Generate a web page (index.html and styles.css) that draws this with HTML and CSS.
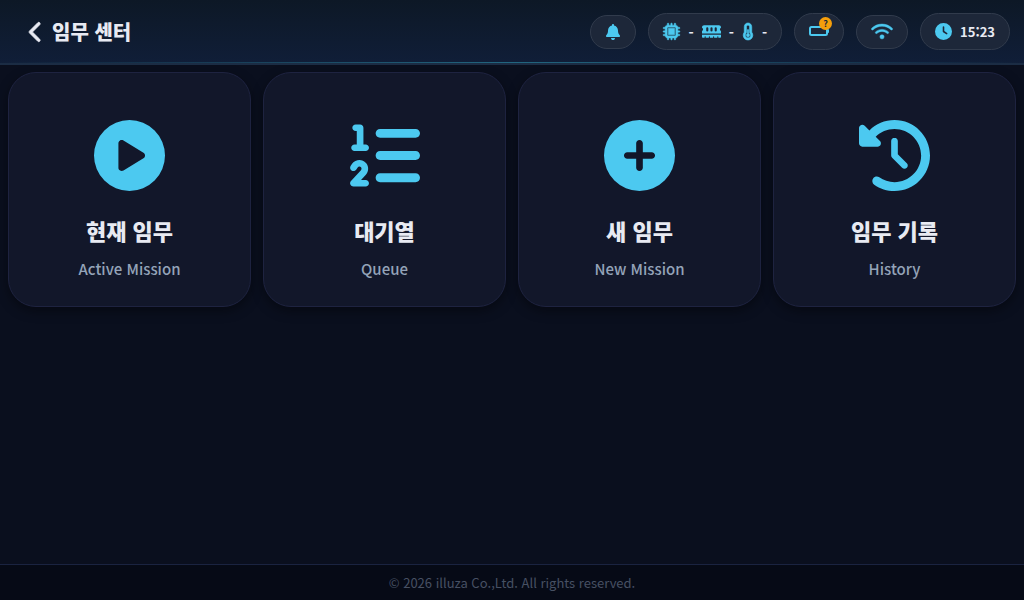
FILE: index.html
```html
<!DOCTYPE html>
<html lang="ko">
<head>
<meta charset="utf-8">
<meta name="viewport" content="width=device-width, initial-scale=1">
<title>임무 센터</title>
<link rel="stylesheet" href="styles.css">
</head>
<body>
<header class="topbar">
  <div class="heading">
    <button class="back" type="button" aria-label="뒤로">
      <svg class="icon-back" viewBox="0 0 320 512"><path d="M9.4 233.4c-12.5 12.5-12.5 32.8 0 45.3l192 192c12.5 12.5 32.8 12.5 45.3 0s12.5-32.8 0-45.3L77.3 256 246.6 86.6c12.5-12.5 12.5-32.8 0-45.3s-32.8-12.5-45.3 0l-192 192z"/></svg>
    </button>
    <h1 class="title">임무 센터</h1>
  </div>
  <div class="status">
    <button class="pill pill-button" type="button" aria-label="알림">
      <svg class="icon-bell" viewBox="0 0 448 512"><path d="M224 0c-17.7 0-32 14.3-32 32V51.2C119 66 64 130.6 64 208v18.8c0 47-17.3 92.4-48.5 127.6l-7.4 8.3c-8.4 9.4-10.4 22.9-5.3 34.4S19.4 416 32 416H416c12.6 0 24-7.4 29.2-18.9s3.1-25-5.3-34.4l-7.4-8.3C401.3 319.2 384 273.9 384 226.8V208c0-77.4-55-142-128-156.8V32c0-17.7-14.3-32-32-32zm45.3 493.3c12-12 18.7-28.3 18.7-45.3H224 160c0 17 6.7 33.3 18.7 45.3s28.3 18.7 45.3 18.7s33.3-6.7 45.3-18.7z"/></svg>
    </button>
    <div class="pill pill-system">
      <svg class="icon-chip" viewBox="0 0 512 512"><path fill-rule="evenodd" d="M176 24c0-13.3-10.7-24-24-24s-24 10.7-24 24V64c-35.3 0-64 28.7-64 64H24c-13.3 0-24 10.7-24 24s10.7 24 24 24H64v56H24c-13.3 0-24 10.7-24 24s10.7 24 24 24H64v56H24c-13.3 0-24 10.7-24 24s10.7 24 24 24H64c0 35.3 28.7 64 64 64v40c0 13.3 10.7 24 24 24s24-10.7 24-24V448h56v40c0 13.3 10.7 24 24 24s24-10.7 24-24V448h56v40c0 13.3 10.7 24 24 24s24-10.7 24-24V448c35.3 0 64-28.7 64-64h40c13.3 0 24-10.7 24-24s-10.7-24-24-24H448V280h40c13.3 0 24-10.7 24-24s-10.7-24-24-24H448V176h40c13.3 0 24-10.7 24-24s-10.7-24-24-24H448c0-35.3-28.7-64-64-64V24c0-13.3-10.7-24-24-24s-24 10.7-24 24V64H280V24c0-13.3-10.7-24-24-24s-24 10.7-24 24V64H176V24zM160 128H352c17.7 0 32 14.3 32 32V352c0 17.7-14.3 32-32 32H160c-17.7 0-32-14.3-32-32V160c0-17.7 14.3-32 32-32zM352 160H160V352H352V160z"/></svg>
      <span>-</span>
      <svg class="icon-memory" viewBox="0 0 576 512"><path fill-rule="evenodd" d="M64 64C28.7 64 0 92.7 0 128v7.4c0 6.8 4.4 12.6 10.1 16.3C23.3 160.3 32 175.1 32 192s-8.7 31.7-21.9 40.3C4.4 236 0 241.8 0 248.6V320H576V248.6c0-6.8-4.4-12.6-10.1-16.3C552.7 223.7 544 208.9 544 192s8.7-31.7 21.9-40.3c5.7-3.7 10.1-9.5 10.1-16.3V128c0-35.3-28.7-64-64-64H64zM576 352H0v64c0 17.7 14.3 32 32 32H80V416a16 16 0 0 1 32 0v32h96V416a16 16 0 0 1 32 0v32h96V416a16 16 0 0 1 32 0v32h96V416a16 16 0 0 1 32 0v32h48c17.7 0 32-14.3 32-32V352zM192 160v64a32 32 0 0 1-64 0V160a32 32 0 0 1 64 0zm128 0v64a32 32 0 0 1-64 0V160a32 32 0 0 1 64 0zm128 0v64a32 32 0 0 1-64 0V160a32 32 0 0 1 64 0z"/></svg>
      <span>-</span>
      <svg class="icon-temp" viewBox="0 0 320 512"><path fill-rule="evenodd" d="M160 64c-26.5 0-48 21.5-48 48V276.5c0 17.3-7.1 31.9-15.3 42.5C86.2 332.6 80 349.5 80 368c0 44.2 35.8 80 80 80s80-35.8 80-80c0-18.5-6.2-35.4-16.7-48.9c-8.2-10.6-15.3-25.2-15.3-42.5V112c0-26.5-21.5-48-48-48zM48 112C48 50.2 98.1 0 160 0s112 50.1 112 112V276.5c0 .1 .1 .3 .2 .6c.2 .6 .8 1.6 1.7 2.8c18.9 24.4 30.1 55 30.1 88.1c0 79.5-64.5 144-144 144S16 447.5 16 368c0-33.2 11.2-63.8 30.1-88.1c.9-1.2 1.5-2.2 1.7-2.8c.1-.3 .2-.5 .2-.6V112zM208 368c0 26.5-21.5 48-48 48s-48-21.5-48-48c0-20.9 13.4-38.7 32-45.3V208c0-8.8 7.2-16 16-16s16 7.2 16 16V322.7c18.6 6.6 32 24.4 32 45.3z"/></svg>
      <span>-</span>
    </div>
    <div class="pill pill-battery">
      <span class="battery">
        <svg class="icon-battery" viewBox="0 0 20 14"><rect x="1" y="2" width="17" height="8" rx="1.5" fill="none" stroke="currentColor" stroke-width="2"/><rect x="18" y="4" width="2" height="4" rx="1"/></svg>
        <span class="badge">?</span>
      </span>
    </div>
    <div class="pill pill-button">
      <svg class="icon-wifi" viewBox="0 0 640 512"><path d="M54.2 202.9C123.2 136.7 216.8 96 320 96s196.8 40.7 265.8 106.9c12.8 12.2 33 11.8 45.2-.9s11.8-33-.9-45.2C549.7 79.5 440.4 32 320 32S90.3 79.5 9.8 156.7C-2.9 169-3.3 189.2 8.9 202s32.5 13.2 45.2 .9zM320 256c56.8 0 108.6 21.1 148.2 56c13.3 11.7 33.5 10.4 45.2-2.8s10.4-33.5-2.8-45.2C459.8 219.2 393 192 320 192s-139.8 27.2-190.5 72c-13.3 11.7-14.5 31.9-2.8 45.2s31.9 14.5 45.2 2.8c39.5-34.9 91.3-56 148.2-56zm64 160a64 64 0 1 0 -128 0 64 64 0 1 0 128 0z"/></svg>
    </div>
    <div class="pill pill-clock">
      <svg class="icon-clock" viewBox="0 0 512 512"><path fill-rule="evenodd" d="M256 0a256 256 0 1 1 0 512A256 256 0 1 1 256 0zM232 120V256c0 8 4 15.5 10.7 20l96 64c11 7.4 25.9 4.4 33.3-6.7s4.4-25.9-6.7-33.3L280 243.2V120c0-13.3-10.7-24-24-24s-24 10.7-24 24z"/></svg>
      <time class="time">15:23</time>
    </div>
  </div>
</header>

<main class="menu">
  <button class="card" type="button">
    <svg class="card-icon" viewBox="0 0 512 512"><path fill-rule="evenodd" d="M0 256a256 256 0 1 1 512 0A256 256 0 1 1 0 256zM188.3 147.1c-7.6 4.2-12.3 12.3-12.3 20.9V344c0 8.7 4.7 16.7 12.3 20.9s16.8 4.1 24.3-.5l144-88c7.1-4.4 11.5-12.1 11.5-20.5s-4.4-16.1-11.5-20.5l-144-88c-7.4-4.5-16.7-4.7-24.3-.5z"/></svg>
    <span class="card-title">현재 임무</span>
    <span class="card-subtitle">Active Mission</span>
  </button>
  <button class="card" type="button">
    <svg class="card-icon" viewBox="0 0 512 512"><path d="M24 56c0-13.3 10.7-24 24-24H80c13.3 0 24 10.7 24 24V176h16c13.3 0 24 10.7 24 24s-10.7 24-24 24H40c-13.3 0-24-10.7-24-24s10.7-24 24-24H56V80H48C34.7 80 24 69.3 24 56zM86.7 341.2c-6.5-7.4-18.3-6.9-24 1.2L51.5 357.9c-7.7 10.8-22.7 13.3-33.5 5.6s-13.3-22.7-5.6-33.5l11.1-15.6c23.7-33.2 72.3-35.6 99.2-4.9c21.3 24.4 20.8 60.9-1.1 84.7L86.8 432H120c13.3 0 24 10.7 24 24s-10.7 24-24 24H32c-9.5 0-18.2-5.6-22-14.4s-2.1-18.9 4.3-25.9l72-78c5.3-5.8 5.4-14.6 .3-20.5zM224 64H480c17.7 0 32 14.3 32 32s-14.3 32-32 32H224c-17.7 0-32-14.3-32-32s14.3-32 32-32zm0 160H480c17.7 0 32 14.3 32 32s-14.3 32-32 32H224c-17.7 0-32-14.3-32-32s14.3-32 32-32zm0 160H480c17.7 0 32 14.3 32 32s-14.3 32-32 32H224c-17.7 0-32-14.3-32-32s14.3-32 32-32z"/></svg>
    <span class="card-title">대기열</span>
    <span class="card-subtitle">Queue</span>
  </button>
  <button class="card" type="button">
    <svg class="card-icon" viewBox="0 0 512 512"><path fill-rule="evenodd" d="M256 512A256 256 0 1 0 256 0a256 256 0 1 0 0 512zM232 344V280H168c-13.3 0-24-10.7-24-24s10.7-24 24-24h64V168c0-13.3 10.7-24 24-24s24 10.7 24 24v64h64c13.3 0 24 10.7 24 24s-10.7 24-24 24H280v64c0 13.3-10.7 24-24 24s-24-10.7-24-24z"/></svg>
    <span class="card-title">새 임무</span>
    <span class="card-subtitle">New Mission</span>
  </button>
  <button class="card" type="button">
    <svg class="card-icon" viewBox="0 0 512 512"><path d="M75 75L41 41C25.9 25.9 0 36.6 0 57.9V168c0 13.3 10.7 24 24 24H134.1c21.4 0 32.1-25.9 17-41l-30.8-30.8C155 85.5 203 64 256 64c106 0 192 86 192 192s-86 192-192 192c-40.8 0-78.6-12.7-109.7-34.4c-14.5-10.1-34.4-6.6-44.6 7.9s-6.6 34.4 7.9 44.6C151.2 495 201.7 512 256 512c141.4 0 256-114.6 256-256S397.4 0 256 0C185.3 0 121.3 28.7 75 75zm181 53c-13.3 0-24 10.7-24 24V256c0 6.4 2.5 12.5 7 17l72 72c9.4 9.4 24.6 9.4 33.9 0s9.4-24.6 0-33.9l-65-65V152c0-13.3-10.7-24-24-24z"/></svg>
    <span class="card-title">임무 기록</span>
    <span class="card-subtitle">History</span>
  </button>
</main>

<footer class="footer">© 2026 illuza Co.,Ltd. All rights reserved.</footer>
</body>
</html>
```

FILE: styles.css
```css
* {
  box-sizing: border-box;
}

body {
  display: flex;
  flex-direction: column;
  min-height: 100vh;
  margin: 0;
  background: #0a0f1e;
  color: #e8eaf2;
  font-family: "Noto Sans CJK KR", "Noto Sans", sans-serif;
}

button {
  margin: 0;
  color: inherit;
  font: inherit;
  cursor: pointer;
}

svg {
  display: block;
  flex: none;
  overflow: visible;
  fill: currentColor;
}

.topbar {
  position: relative;
  display: flex;
  align-items: center;
  justify-content: space-between;
  min-height: 65px;
  padding: 0 14px 0 24px;
  border-bottom: 2px solid #1b2c44;
  background: linear-gradient(180deg, #0d1826, #101e38);
}

.topbar::after {
  content: "";
  position: absolute;
  right: 0;
  bottom: 0;
  left: 0;
  height: 1px;
  background: linear-gradient(90deg, transparent, #226680, transparent);
}

.heading {
  display: flex;
  align-items: center;
  gap: 4px;
}

.back {
  padding: 8px 5px;
  border: 0;
  background: none;
}

.icon-back {
  width: 14px;
  height: 22px;
  stroke: currentColor;
  stroke-width: 20;
}

.title {
  margin: 0;
  font-size: 20px;
  font-weight: 900;
  line-height: 30px;
}

.status {
  display: flex;
  align-items: center;
  gap: 12px;
}

.pill {
  display: flex;
  align-items: center;
  height: 37px;
  padding: 0 14px;
  border: 1px solid #313b4c;
  border-radius: 20px;
  background: #1d2739;
  color: #4cc9f0;
}

.pill-button {
  height: 34px;
}

.pill-system {
  gap: 8px;
}

.pill-system span {
  color: #e8eaf2;
  font-size: 14px;
  font-weight: 700;
  line-height: 20px;
}

.pill-clock {
  gap: 8px;
}

.icon-bell {
  width: 16px;
  height: 16px;
}

.icon-chip,
.icon-clock {
  width: 17px;
  height: 17px;
}

.icon-chip {
  stroke: currentColor;
  stroke-width: 12;
}

.icon-memory {
  width: 19px;
  height: 17px;
}

.icon-temp {
  width: 12px;
  height: 17px;
  stroke: currentColor;
  stroke-width: 20;
}

.icon-wifi {
  width: 22px;
  height: 17px;
  stroke: currentColor;
  stroke-width: 14;
}

.battery {
  position: relative;
}

.icon-battery {
  width: 20px;
  height: 14px;
}

.badge {
  position: absolute;
  top: -8px;
  right: -3px;
  width: 13px;
  height: 13px;
  border-radius: 50%;
  background: #f59e0b;
  color: #1d2739;
  font-size: 9px;
  font-weight: 700;
  line-height: 13px;
  text-align: center;
}

.time {
  color: #e8eaf2;
  font-size: 13px;
  font-weight: 700;
  line-height: 20px;
}

.menu {
  display: grid;
  flex: 1;
  grid-template-columns: repeat(4, 1fr);
  align-content: start;
  gap: 12px;
  padding: 7px 8px;
}

.card {
  display: flex;
  flex-direction: column;
  align-items: center;
  padding: 47px 16px 25px;
  border: 1px solid #1e2340;
  border-radius: 28px;
  background: #12172a;
  box-shadow: 0 4px 12px rgba(0, 0, 0, 0.4);
}

.card-icon {
  width: 71px;
  height: 71px;
  margin-bottom: 23px;
  color: #4cc9f0;
}

.card-title {
  margin-bottom: 11px;
  font-size: 22px;
  font-weight: 900;
  line-height: 32px;
}

.card-subtitle {
  color: #94a3b8;
  font-size: 15px;
  font-weight: 500;
  line-height: 24px;
}

.footer {
  padding: 8px;
  border-top: 1px solid #1a2340;
  background: #060a16;
  color: #475063;
  font-size: 13px;
  line-height: 19px;
  text-align: center;
}
```
